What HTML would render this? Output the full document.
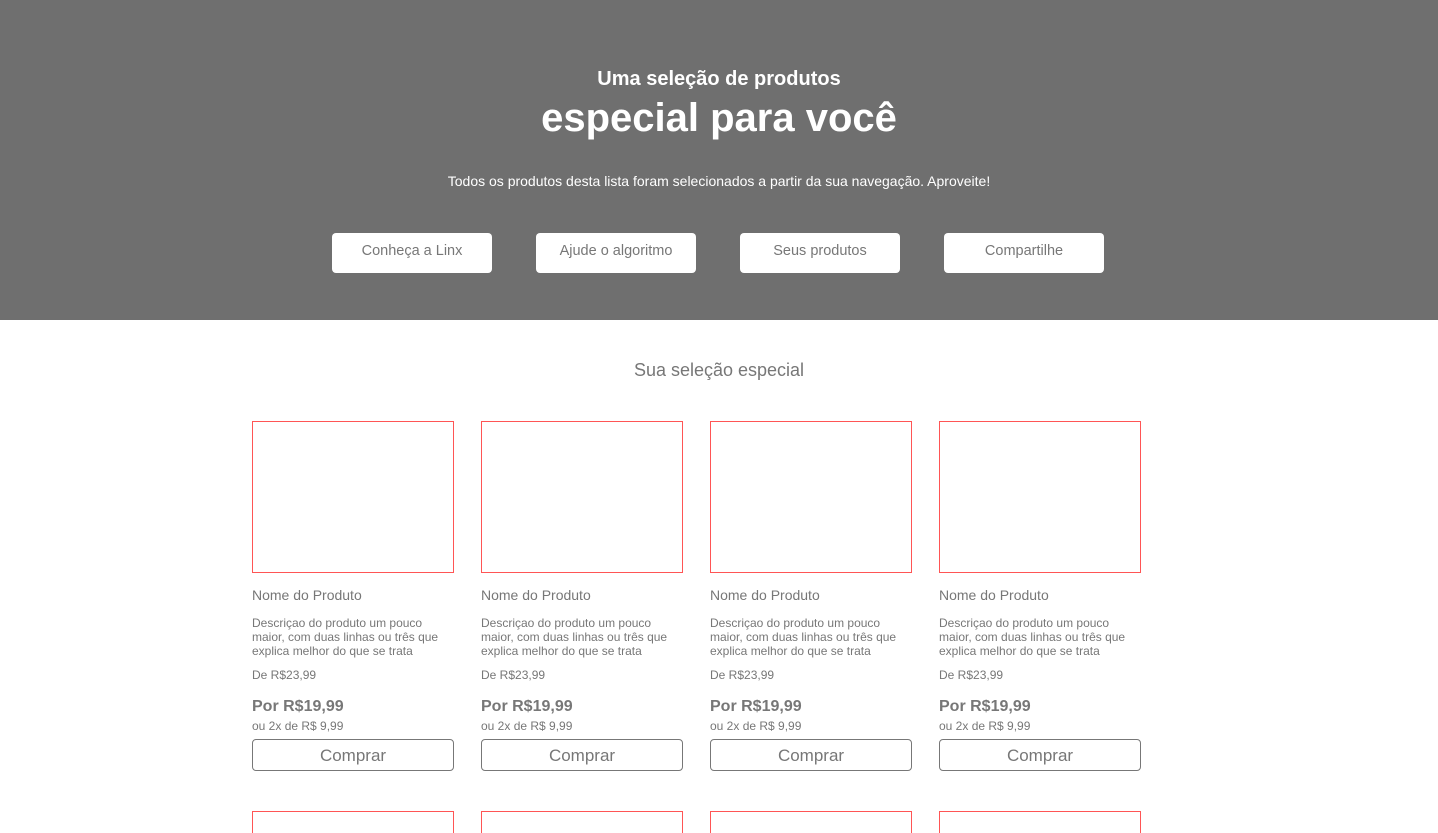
<!DOCTYPE html>
<html><head><meta charset="utf-8">
<style>
*{margin:0;padding:0;box-sizing:border-box}
html{width:1438px;height:833px;overflow:hidden}
body{width:1438px;height:833px;overflow:hidden;background:#fff;font-family:"Liberation Sans",Arial,sans-serif;color:#777;position:relative}
.hero{position:absolute;left:0;top:0;width:1438px;height:320px;background:#6f6f6f;color:#fff;text-align:center}
.h1{position:absolute;left:0;width:100%;top:67px;font-size:20px;font-weight:bold;line-height:24px}
.h2{position:absolute;left:0;width:100%;top:94px;font-size:40px;font-weight:bold;line-height:48px}
.sub{position:absolute;left:0;width:100%;top:172px;font-size:14px;line-height:18px}
.hb{position:absolute;top:233px;width:160px;height:40px;background:#fff;border-radius:4px;color:#777;font-size:14.5px;line-height:36px;text-align:center}
.title{position:absolute;left:0;width:100%;top:358px;text-align:center;font-size:18px;line-height:24px;color:#777}
.card{position:absolute;width:202px}
.img{position:absolute;left:0;width:202px;height:152px;border:1px solid #f55}
.img2{position:absolute;left:0;top:390px;width:202px;height:22px;border:1px solid #f55;border-bottom:none}
.nm{position:absolute;top:165px;font-size:14px;line-height:18px;white-space:nowrap}
.ds{position:absolute;top:195px;font-size:12px;line-height:14px;width:202px}
.de{position:absolute;top:247px;font-size:12px;line-height:14px;white-space:nowrap}
.por{position:absolute;top:276px;font-size:16px;font-weight:bold;line-height:20px;white-space:nowrap}
.ou{position:absolute;top:298px;font-size:12px;line-height:14px;white-space:nowrap}
.bt{position:absolute;top:318px;left:0;width:202px;height:32px;border:1px solid #777;border-radius:4px;text-align:center;font-size:17px;line-height:31px}
</style></head><body>
<div class="hero">
<div class="h1">Uma seleção de produtos</div>
<div class="h2">especial para você</div>
<div class="sub">Todos os produtos desta lista foram selecionados a partir da sua navegação. Aproveite!</div>
<div class="hb" style="left:332px">Conheça a Linx</div>
<div class="hb" style="left:536px">Ajude o algoritmo</div>
<div class="hb" style="left:740px">Seus produtos</div>
<div class="hb" style="left:944px">Compartilhe</div>
</div>
<div class="title">Sua seleção especial</div>

<div class="card" style="left:252px;top:421px"><div class="img" style="top:0"></div><div class="nm">Nome do Produto</div><div class="ds">Descriçao do produto um pouco maior, com duas linhas ou três que explica melhor do que se trata</div><div class="de">De R$23,99</div><div class="por">Por R$19,99</div><div class="ou">ou 2x de R$ 9,99</div><div class="bt">Comprar</div><div class="img2"></div></div>
<div class="card" style="left:481px;top:421px"><div class="img" style="top:0"></div><div class="nm">Nome do Produto</div><div class="ds">Descriçao do produto um pouco maior, com duas linhas ou três que explica melhor do que se trata</div><div class="de">De R$23,99</div><div class="por">Por R$19,99</div><div class="ou">ou 2x de R$ 9,99</div><div class="bt">Comprar</div><div class="img2"></div></div>
<div class="card" style="left:710px;top:421px"><div class="img" style="top:0"></div><div class="nm">Nome do Produto</div><div class="ds">Descriçao do produto um pouco maior, com duas linhas ou três que explica melhor do que se trata</div><div class="de">De R$23,99</div><div class="por">Por R$19,99</div><div class="ou">ou 2x de R$ 9,99</div><div class="bt">Comprar</div><div class="img2"></div></div>
<div class="card" style="left:939px;top:421px"><div class="img" style="top:0"></div><div class="nm">Nome do Produto</div><div class="ds">Descriçao do produto um pouco maior, com duas linhas ou três que explica melhor do que se trata</div><div class="de">De R$23,99</div><div class="por">Por R$19,99</div><div class="ou">ou 2x de R$ 9,99</div><div class="bt">Comprar</div><div class="img2"></div></div>
</body></html>
